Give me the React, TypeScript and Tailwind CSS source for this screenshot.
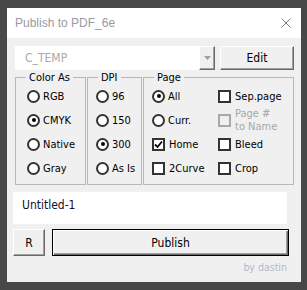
import React from "react";

const ui = { fontFamily: '"DejaVu Sans Condensed", Tahoma, "Liberation Sans", sans-serif' };

function Radio({ label, checked }: { label: string; checked?: boolean }) {
  return (
    <div className="flex items-center gap-[3px] h-[24px]">
      <span className="w-[13px] h-[13px] rounded-full border-2 border-[#333] bg-white flex items-center justify-center">
        {checked && <span className="w-[4px] h-[4px] rounded-full bg-black" />}
      </span>
      <span className="text-[11px] text-black leading-[13px]">{label}</span>
    </div>
  );
}

function Check({ label, checked, disabled }: { label: React.ReactNode; checked?: boolean; disabled?: boolean }) {
  return (
    <div className="flex items-center gap-[4px] h-[24px]">
      <span
        className={
          "w-[13px] h-[13px] shrink-0 border-2 flex items-center justify-center " +
          (disabled ? "border-[#a8a8a8] bg-[#f0f0f0]" : "border-[#333] bg-white")
        }
      >
        {checked && (
          <svg width="9" height="9" viewBox="0 0 9 9">
            <path d="M1 4.5 L3.5 7 L8 1.5" fill="none" stroke="#000" strokeWidth="1.8" />
          </svg>
        )}
      </span>
      <span className={"text-[11px] leading-[13px] " + (disabled ? "text-[#a8a8a8]" : "text-black")}>{label}</span>
    </div>
  );
}

function Group({ title, className, children }: { title: string; className: string; children: React.ReactNode }) {
  return (
    <fieldset className={"border border-[#b8b8b8] pb-[4px] " + className}>
      <legend className="ml-[10px] px-[3px] text-[11px] leading-[13px] text-black">{title}</legend>
      {children}
    </fieldset>
  );
}

const bevel =
  "bg-[#f0f0f0] border border-t-white border-l-white border-r-[#696969] border-b-[#696969] shadow-[inset_-1px_-1px_0_#a0a0a0]";

export default function App() {
  return (
    <div className="w-[307px] h-[290px] bg-[#484848] pt-[8px] pl-[7px]" style={ui}>
      <div className="w-[294px] h-[274px] flex flex-col">
        {/* title bar */}
        <div className="h-[30px] bg-white flex items-center justify-between pl-[8px] pr-[10px]">
          <span className="text-[12px] text-[#9a9aa2]" style={{ fontFamily: '"Liberation Sans", sans-serif' }}>
            Publish to PDF_6e
          </span>
          <svg width="10" height="10" viewBox="0 0 10 10">
            <path d="M0.5 0.5 L9.5 9.5 M9.5 0.5 L0.5 9.5" stroke="#808080" strokeWidth="1" />
          </svg>
        </div>

        {/* client */}
        <div className="flex-1 bg-[#f0f0f0] flex flex-col pl-[8px] pt-[8px]">
          <div className="flex h-[24px] w-[279px]">
            <div className="w-[184px] bg-white flex items-center pl-[10px] text-[12px] text-[#a8a8a8]">C_TEMP</div>
            <div className={"w-[16px] flex items-center justify-center " + bevel}>
              <svg width="7" height="4" viewBox="0 0 7 4">
                <path d="M0 0 L7 0 L3.5 4 Z" fill="#a0a0a0" />
              </svg>
            </div>
            <button className={"ml-[5px] w-[74px] text-[12px] text-black " + bevel}>Edit</button>
          </div>

          <div className="flex gap-[1px] w-[279px] mt-[1px]">
            <Group title="Color As" className="w-[71px]">
              <div className="pl-[11px]">
                <Radio label="RGB" />
                <Radio label="CMYK" checked />
                <Radio label="Native" />
                <Radio label="Gray" />
              </div>
            </Group>
            <Group title="DPI" className="w-[55px]">
              <div className="pl-[8px]">
                <Radio label="96" />
                <Radio label="150" />
                <Radio label="300" checked />
                <Radio label="As Is" />
              </div>
            </Group>
            <Group title="Page" className="w-[151px]">
              <div className="grid grid-cols-[66px_1fr] pl-[8px]">
                <Radio label="All" checked />
                <Check label="Sep.page" />
                <Radio label="Curr." />
                <Check
                  disabled
                  label={
                    <span className="block leading-[13px]">
                      Page #
                      <br />
                      to Name
                    </span>
                  }
                />
                <Check label="Home" checked />
                <Check label="Bleed" />
                <Check label="2Curve" />
                <Check label="Crop" />
              </div>
            </Group>
          </div>

          <div className="-ml-[2px] mt-[7px] w-[274px] h-[32px] bg-white pl-[9px] pt-[4px] text-[12px] text-[#101030]">
            Untitled-1
          </div>

          <div className="flex -ml-[2px] mt-[5px] h-[27px]">
            <button className={"w-[32px] text-[12px] text-black " + bevel}>R</button>
            <button className="ml-[7px] w-[237px] text-[12px] text-black bg-[#f0f0f0] border border-black shadow-[inset_1px_1px_0_#fff,inset_-1px_-1px_0_#696969,inset_-2px_-2px_0_#a0a0a0]">
              Publish
            </button>
          </div>

          <div className="self-end mr-[14px] mt-[4px] text-[10.5px] text-[#b0b8c8]">by dastin</div>
        </div>
      </div>
    </div>
  );
}
